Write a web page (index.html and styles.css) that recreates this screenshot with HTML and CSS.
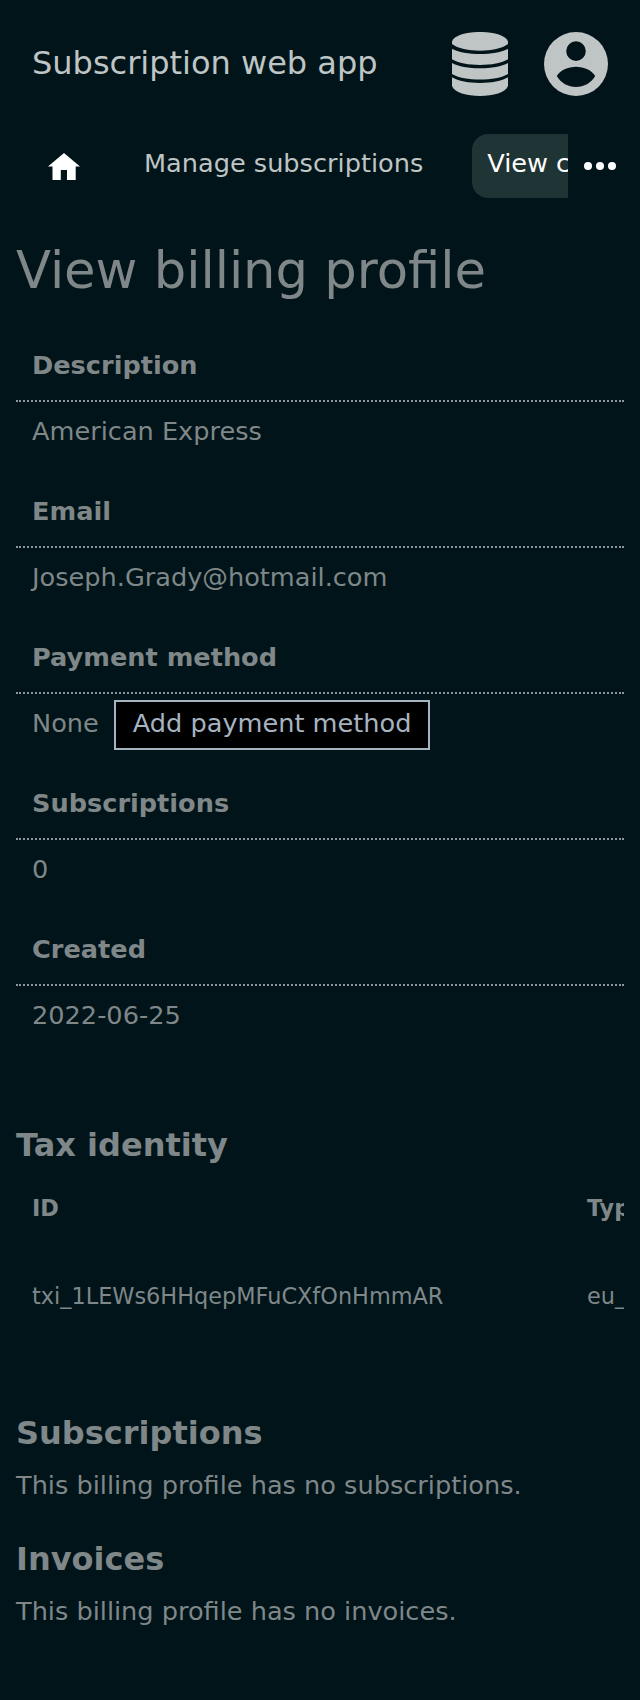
FILE: index.html
```html
<!DOCTYPE html>
<html lang="en"><head><meta charset="utf-8"><title>Subscription web app</title><link rel="stylesheet" href="styles.css"></head>
<body>
<header class="header">
  <div class="brand">Subscription web app</div>
  <svg class="icon-db" viewBox="0 0 56 64"><path d="M0 9.500C4-3.200 52-3.200 56 9.500V12C45 20.900 11 20.900 0 12zM0 16.700C12 23.800 44 23.800 56 16.700V27.300C44 34.900 12 34.900 0 27.300zM0 31C12 38.100 44 38.100 56 31V42C44 49.400 12 49.400 0 42zM0 45.200C12 52.800 44 52.800 56 45.200V54C52 67.300 4 67.300 0 54z"/></svg>
  <svg class="icon-user" viewBox="0 0 64 64"><path fill-rule="evenodd" d="M32 0a32 32 0 1 0 0 64 32 32 0 0 0 0-64zm0 9.300a9.800 9.800 0 1 1 0 19.600 9.800 9.800 0 0 1 0-19.600zM12.800 44C16 38.500 24 34.800 32 34.800S48 38.500 51.200 44C47 51 40 55 32 55S17 51 12.800 44z"/></svg>
</header>
<nav class="nav">
  <div class="tabs">
    <a class="home"><svg viewBox="0 0 32 27"><path d="M16 0l16 13.500h-4.300V27H19V17h-6.200v10H4.500V13.500H0z"/></svg></a>
    <a class="tab">Manage subscriptions</a>
    <a class="tab active">View customer</a>
  </div>
  <svg class="more" viewBox="0 0 32 32"><circle cx="4" cy="16" r="4"/><circle cx="16" cy="16" r="4"/><circle cx="28" cy="16" r="4"/></svg>
</nav>
<main class="main">
  <h1>View billing profile</h1>
  <dl class="details">
    <dt>Description</dt><dd>American Express</dd>
    <dt>Email</dt><dd>Joseph.Grady@hotmail.com</dd>
    <dt>Payment method</dt><dd class="payment">None <a class="button">Add payment method</a></dd>
    <dt>Subscriptions</dt><dd>0</dd>
    <dt>Created</dt><dd>2022-06-25</dd>
  </dl>
  <h2>Tax identity</h2>
  <div class="scroller">
    <table class="table">
      <tr><th>ID</th><th>Type</th></tr>
      <tr><td>txi_1LEWs6HHqepMFuCXfOnHmmAR</td><td>eu_vat</td></tr>
    </table>
  </div>
  <h2>Subscriptions</h2>
  <p>This billing profile has no subscriptions.</p>
  <h2>Invoices</h2>
  <p>This billing profile has no invoices.</p>
</main>
</body></html>
```
FILE: styles.css
```css
* { box-sizing: border-box; }
body { margin: 0; background: #001419; color: #7f8789; font: 25.6px/32px "DejaVu Sans", sans-serif; }
.header { display: flex; height: 128px; padding: 0 32px; align-items: center; color: #bfc4c5; font-size: 32px; }
.brand { flex: 1; padding-bottom: 2px; }
.header svg { fill: #bfc4c5; height: 64px; }
.icon-db { width: 56px; margin-right: 36px; }
.icon-user { width: 64px; }
.nav { display: flex; height: 76px; padding-left: 16px; align-items: flex-start; }
.tabs { display: flex; width: 552px; overflow: hidden; padding-top: 6px; white-space: nowrap; }
.home { flex: none; width: 112px; height: 64px; padding: 19px 32px; }
.home svg { display: block; width: 32px; height: 27px; fill: #fff; }
.tab { flex: none; height: 64px; padding: 13px 16px; margin-right: 32.6px; color: #bfc4c5; }
.active { padding-left: 15.4px; background: #1f3434; color: #fff; border-radius: 16px; }
.more { width: 32px; height: 32px; margin: 22px 0 0 16px; fill: #fff; }
.main { padding: 0 16px; }
h1 { margin: 34px 0 46px; font-size: 51.2px; line-height: 64px; font-weight: 400; }
.details { margin: 0 0 47px; }
dt { height: 54px; padding: 1px 16px 0; font-weight: 700; border-bottom: 2px dotted #8c9899; }
dd { height: 92px; margin: 0; padding: 13px 16px; }
.payment { display: flex; gap: 15px; align-items: flex-start; }
.button { margin-top: -7px; padding: 5px 17px 9px; border: 2px solid #a6b4c2; background: #000; color: #a6b4c2; }
h2 { margin: 0 0 16px; font-size: 32px; line-height: 40px; }
.scroller { overflow: hidden; margin: -17px 0 73px; }
.table { border-collapse: collapse; font-size: 22.4px; width: 1000px; table-layout: fixed; }
th, td { padding: 0 16px; text-align: left; height: 88px; }
th:first-child { width: 555px; }
p { margin: 0 0 38px; }
```
